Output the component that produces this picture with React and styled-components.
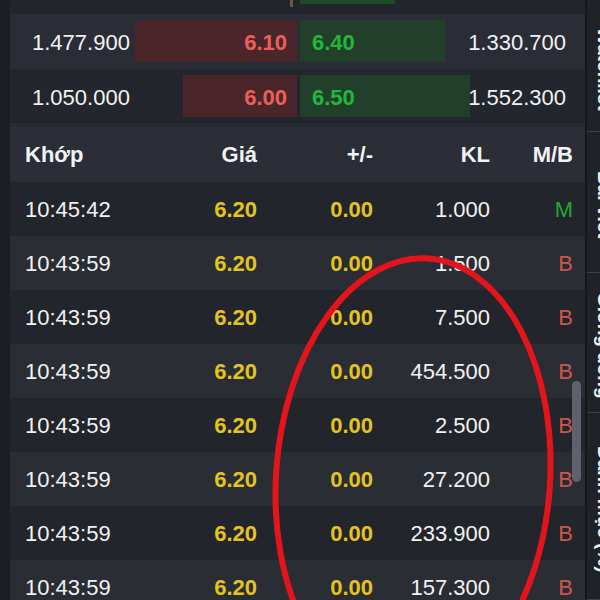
import React from "react";
import styled, { createGlobalStyle } from "styled-components";

const Global = createGlobalStyle`
  html, body { margin: 0; padding: 0; background: #1d1f24; }
  body { font-family: "Liberation Sans", Arial, sans-serif; }
`;

const Page = styled.div`
  position: relative;
  width: 600px;
  height: 600px;
  overflow: hidden;
  display: flex;
  align-items: flex-start;
  background: #1d1f24;
`;

const LeftStrip = styled.div`
  width: 10px;
  height: 600px;
  flex-shrink: 0;
  background: #1c1e23;
`;

const Main = styled.div`
  width: 575px;
  flex-shrink: 0;
  display: flex;
  flex-direction: column;
  background: #23262d;
  & > * { flex-shrink: 0; }
`;

const TopStub = styled.div`
  height: 14px;
  display: grid;
  grid-template-columns: 287px 288px;
  gap: 3px;
  background: #22252b;
`;

const StubLeft = styled.div`
  display: flex;
  justify-content: flex-end;
  padding-right: 4px;
`;

const StubTick = styled.div`
  width: 3px;
  height: 7px;
  background: #6b5a3a;
`;

const StubBar = styled.div`
  width: 95px;
  height: 4px;
  background: #1f4a2a;
`;

const BookRow = styled.div`
  height: 55px;
  display: grid;
  grid-template-columns: 287px 285px;
  column-gap: 3px;
  background: ${(p) => (p.$alt ? "#23262d" : "#2a2d35")};
`;

const BookSide = styled.div`
  position: relative;
  display: flex;
  align-items: center;
  justify-content: space-between;
  padding: ${(p) => (p.$side === "bid" ? "2px 10px 0 22px" : "2px 19px 0 12px")};
  font-size: 22px;
`;

const DepthBar = styled.div`
  position: absolute;
  top: 6px;
  bottom: 7px;
  ${(p) => (p.$side === "bid" ? "right: 0;" : "left: 0;")}
  background: ${(p) => (p.$side === "bid" ? "#4a2529" : "#213f2b")};
`;

const Volume = styled.span`
  position: relative;
  color: #f1f2f4;
`;

const BookPrice = styled.span`
  position: relative;
  color: ${(p) => (p.$side === "bid" ? "#ec5f58" : "#1fb83a")};
  font-weight: 600;
`;

const Divider = styled.div`
  height: 1px;
  border-top: 1px dotted #3a3e47;
`;

const TradeRow = styled.div`
  height: ${(p) => (p.$head ? "56px" : "54px")};
  display: grid;
  grid-template-columns: 125px 107px 116px 117px 83px;
  align-items: center;
  padding: 2px 12px 0 15px;
  box-sizing: border-box;
  font-size: 22px;
  font-weight: ${(p) => (p.$head ? 700 : 400)};
  background: ${(p) => (p.$head ? "#2b2e36" : p.$alt ? "#2a2d34" : "#22252b")};
`;

const Cell = styled.span`
  text-align: ${(p) => (p.$left ? "left" : "right")};
  color: ${(p) => p.$color || "#f1f2f4"};
  font-weight: ${(p) => (p.$bold ? 600 : "inherit")};
`;

const Sidebar = styled.div`
  width: 34px;
  height: 600px;
  flex-shrink: 0;
  display: flex;
  flex-direction: column;
  border-left: 2px solid #15171b;
  background: #1f2227;
`;

const SideTab = styled.div`
  height: ${(p) => p.$h}px;
  flex-shrink: 0;
  border-bottom: 1px solid #3a3e46;
  writing-mode: vertical-rl;
  display: flex;
  align-items: center;
  justify-content: center;
  padding-top: 6px;
  box-sizing: border-box;
  font-size: 19px;
  font-weight: 700;
  color: #f1f2f4;
  white-space: nowrap;
  overflow: hidden;
`;

const Scrollbar = styled.div`
  position: absolute;
  left: 572px;
  top: 381px;
  width: 9px;
  height: 101px;
  border-radius: 5px;
  background: #5d636d;
`;

const Annotation = styled.svg`
  position: absolute;
  left: 0;
  top: 0;
  pointer-events: none;
`;

const book = [
  { bv: "1.477.900", bp: "6.10", bw: 162, ap: "6.40", aw: 145, av: "1.330.700" },
  { bv: "1.050.000", bp: "6.00", bw: 114, ap: "6.50", aw: 170, av: "1.552.300" },
];

const trades = [
  ["10:45:42", "1.000", "M"],
  ["10:43:59", "1.500", "B"],
  ["10:43:59", "7.500", "B"],
  ["10:43:59", "454.500", "B"],
  ["10:43:59", "2.500", "B"],
  ["10:43:59", "27.200", "B"],
  ["10:43:59", "233.900", "B"],
  ["10:43:59", "157.300", "B"],
];

const YELLOW = "#e3c41c";

export default function App() {
  return (
    <>
      <Global />
      <Page>
        <LeftStrip />
        <Main>
          <TopStub>
            <StubLeft>
              <StubTick />
            </StubLeft>
            <div>
              <StubBar />
            </div>
          </TopStub>
          {book.map((r, i) => (
            <BookRow key={i} $alt={i % 2 === 1}>
              <BookSide $side="bid">
                <DepthBar $side="bid" style={{ width: r.bw }} />
                <Volume>{r.bv}</Volume>
                <BookPrice $side="bid">{r.bp}</BookPrice>
              </BookSide>
              <BookSide $side="ask">
                <DepthBar $side="ask" style={{ width: r.aw }} />
                <BookPrice $side="ask">{r.ap}</BookPrice>
                <Volume>{r.av}</Volume>
              </BookSide>
            </BookRow>
          ))}
          <Divider />
          <TradeRow $head>
            <Cell $left>Khớp</Cell>
            <Cell>Giá</Cell>
            <Cell>+/-</Cell>
            <Cell>KL</Cell>
            <Cell>M/B</Cell>
          </TradeRow>
          {trades.map(([t, v, s], i) => (
            <TradeRow key={i} $alt={i % 2 === 1}>
              <Cell $left>{t}</Cell>
              <Cell $color={YELLOW} $bold>6.20</Cell>
              <Cell $color={YELLOW} $bold>0.00</Cell>
              <Cell>{v}</Cell>
              <Cell $color={s === "M" ? "#1fa83a" : "#c9574f"}>{s}</Cell>
            </TradeRow>
          ))}
        </Main>
        <Sidebar>
          <SideTab $h={132}>Watchlist</SideTab>
          <SideTab $h={141}>Bài viết</SideTab>
          <SideTab $h={140}>Giống dòng</SideTab>
          <SideTab $h={187}>Danh mục (%)</SideTab>
        </Sidebar>
        <Scrollbar />
        <Annotation width="600" height="600" viewBox="0 0 600 600">
          <ellipse
            cx="413"
            cy="479"
            rx="137"
            ry="221"
            fill="none"
            stroke="#e3141c"
            strokeWidth="6"
            transform="rotate(4 413 479)"
          />
        </Annotation>
      </Page>
    </>
  );
}
